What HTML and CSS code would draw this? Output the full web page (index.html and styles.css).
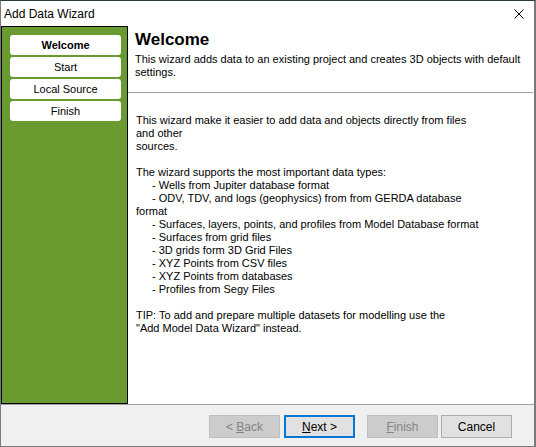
FILE: index.html
```html
<!DOCTYPE html>
<html>
<head>
<meta charset="utf-8">
<title>Add Data Wizard</title>
<link rel="stylesheet" href="styles.css">
</head>
<body>
<div class="window">
  <div class="titlebar">
    <span class="title">Add Data Wizard</span>
    <svg class="close" width="10" height="10" viewBox="0 0 10 10"><path d="M0.5 0.5 L9.5 9.5 M9.5 0.5 L0.5 9.5" stroke="#000" stroke-width="1" fill="none"/></svg>
  </div>
  <div class="main">
    <div class="sidebar">
      <div class="step active">Welcome</div>
      <div class="step">Start</div>
      <div class="step">Local Source</div>
      <div class="step">Finish</div>
    </div>
    <div class="content">
      <div class="header">
        <div class="h-title">Welcome</div>
        <div class="h-sub">This wizard adds data to an existing project and creates 3D objects with default settings.</div>
      </div>
      <div class="body">
        <div class="ln">This wizard make it easier to add data and objects directly from files</div>
        <div class="ln">and other</div>
        <div class="ln">sources.</div>
        <div class="ln blank"></div>
        <div class="ln">The wizard supports the most important data types:</div>
        <div class="ln ind">- Wells from Jupiter database format</div>
        <div class="ln ind">- ODV, TDV, and logs (geophysics) from from GERDA database</div>
        <div class="ln">format</div>
        <div class="ln ind">- Surfaces, layers, points, and profiles from Model Database format</div>
        <div class="ln ind">- Surfaces from grid files</div>
        <div class="ln ind">- 3D grids form 3D Grid Files</div>
        <div class="ln ind">- XYZ Points from CSV files</div>
        <div class="ln ind">- XYZ Points from databases</div>
        <div class="ln ind">- Profiles from Segy Files</div>
        <div class="ln blank"></div>
        <div class="ln">TIP: To add and prepare multiple datasets for modelling use the</div>
        <div class="ln">"Add Model Data Wizard" instead.</div>
      </div>
    </div>
  </div>
  <div class="footer">
    <button class="btn disabled">&lt; <u>B</u>ack</button>
    <button class="btn default"><u>N</u>ext &gt;</button>
    <button class="btn disabled gap"><u>F</u>inish</button>
    <button class="btn">Cancel</button>
  </div>
</div>
</body>
</html>
```

FILE: styles.css
```css
html, body {
  margin: 0;
  padding: 0;
  background: #ffffff;
}
.window {
  width: 536px;
  height: 447px;
  box-sizing: border-box;
  border: 1px solid #7a7a7a;
  border-top-color: #2b3a3a;
  border-right-width: 2px;
  display: flex;
  flex-direction: column;
  background: #ffffff;
  font-family: "Liberation Sans", Arial, sans-serif;
  color: #000;
}
.titlebar {
  height: 25px;
  display: flex;
  align-items: center;
  justify-content: space-between;
  padding: 0 10px 0 3px;
  flex: none;
}
.title {
  font-family: "Liberation Sans", Arial, sans-serif;
  font-size: 12px;
  margin-top: 1px;
}
.close {
  display: block;
  margin-top: 1px;
}
.main {
  flex: 1;
  display: flex;
  min-height: 0;
}
.sidebar {
  width: 127px;
  box-sizing: border-box;
  background: #6a9b30;
  border: 1px solid #000;
  padding: 8px 6px 0 8px;
  display: flex;
  flex-direction: column;
  gap: 2px;
  flex: none;
}
.step {
  height: 20px;
  background: #ffffff;
  border-radius: 3px;
  font-size: 11px;
  display: flex;
  align-items: center;
  justify-content: center;
}
.step.active {
  font-weight: bold;
}
.content {
  flex: 1;
  display: flex;
  flex-direction: column;
}
.header {
  height: 67px;
  box-sizing: border-box;
  border-bottom: 1px solid #a0a0a0;
  padding: 4px 8px 0 7px;
  margin-right: 1px;
}
.h-title {
  font-size: 17px;
  font-weight: bold;
  line-height: 20px;
}
.h-sub {
  font-size: 11px;
  line-height: 13px;
  margin-top: 3px;
}
.body {
  padding: 21px 0 0 8px;
  font-size: 11px;
  line-height: 13px;
}
.ln {
  height: 13px;
  white-space: nowrap;
}
.ind {
  padding-left: 16px;
}
.footer {
  height: 42px;
  flex: none;
  box-sizing: border-box;
  border-top: 1px solid #a0a0a0;
  background: #f0f0f0;
  display: flex;
  justify-content: flex-end;
  align-items: flex-start;
  padding: 10px 22px 0 0;
  gap: 3px;
}
.btn {
  width: 71px;
  height: 23px;
  box-sizing: border-box;
  background: #e1e1e1;
  border: 1px solid #adadad;
  font-family: "Liberation Sans", Arial, sans-serif;
  font-size: 12px;
  color: #000;
  padding: 0;
  margin: 0;
}
.btn.disabled {
  background: #cccccc;
  border-color: #bfbfbf;
  color: #838383;
}
.btn.default {
  border: 2px solid #0078d7;
  margin-left: 1px;
}
.btn.gap {
  margin-left: 9px;
}
```
